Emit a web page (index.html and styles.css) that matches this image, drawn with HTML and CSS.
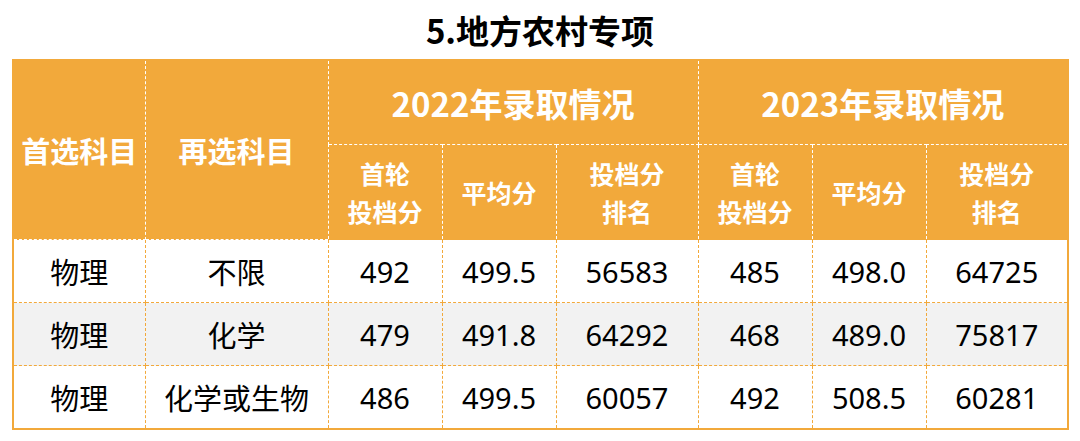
FILE: index.html
```html
<!DOCTYPE html>
<html>
  <head>
    <link rel="stylesheet" href="styles.css">
  </head>
  <body>
    <h1 class="title">5.地方农村专项</h1>
    <table class="scores">
      <colgroup>
        <col class="c-first">
        <col class="c-second">
        <col class="c-num">
        <col class="c-num">
        <col class="c-rank">
        <col class="c-num">
        <col class="c-num">
        <col class="c-rank">
      </colgroup>
      <thead>
        <tr class="head-top">
          <th rowspan="2" class="subject">首选科目</th>
          <th rowspan="2" class="subject">再选科目</th>
          <th colspan="3" class="year">2022年录取情况</th>
          <th colspan="3" class="year">2023年录取情况</th>
        </tr>
        <tr class="head-sub">
          <th>首轮<br>投档分</th>
          <th>平均分</th>
          <th>投档分<br>排名</th>
          <th>首轮<br>投档分</th>
          <th>平均分</th>
          <th>投档分<br>排名</th>
        </tr>
      </thead>
      <tbody>
        <tr>
          <td>物理</td>
          <td>不限</td>
          <td>492</td>
          <td>499.5</td>
          <td>56583</td>
          <td>485</td>
          <td>498.0</td>
          <td>64725</td>
        </tr>
        <tr class="shade">
          <td>物理</td>
          <td>化学</td>
          <td>479</td>
          <td>491.8</td>
          <td>64292</td>
          <td>468</td>
          <td>489.0</td>
          <td>75817</td>
        </tr>
        <tr>
          <td>物理</td>
          <td>化学或生物</td>
          <td>486</td>
          <td>499.5</td>
          <td>60057</td>
          <td>492</td>
          <td>508.5</td>
          <td>60281</td>
        </tr>
      </tbody>
    </table>
  </body>
</html>
```

FILE: styles.css
```css
body {
  margin: 0;
  background: #fff;
  font-family: "Noto Sans", "Noto Sans CJK SC", sans-serif;
  color: #000;
}
.title {
  margin: 0;
  height: 59px;
  display: flex;
  align-items: center;
  justify-content: center;
  font-family: "Noto Sans CJK SC", sans-serif;
  font-size: 33px;
  font-weight: 700;
}
.scores {
  margin-left: 12px;
  width: 1056px;
  table-layout: fixed;
  border-collapse: collapse;
  border: 2px solid #f2a93b;
}
.c-first { width: 132px; }
.c-second { width: 183px; }
.c-num { width: 114px; }
.c-rank { width: 142px; }
th {
  background: #f2a93b;
  color: #fff;
  font-family: "Noto Sans CJK SC", sans-serif;
  font-weight: 700;
  border: 1px dashed #fff;
  padding: 0;
  text-align: center;
}
.head-top th {
  height: 83px;
  border-top: 2px solid #f2a93b;
}
.head-top .subject {
  font-size: 29px;
}
.head-top .year {
  font-size: 33px;
}
.head-sub th {
  height: 94px;
  font-size: 25px;
  line-height: 38px;
  border-bottom: 1px solid #f2a93b;
}
td {
  height: 62px;
  padding: 0;
  text-align: center;
  font-size: 29px;
  border: 1px dashed #f2a93b;
}
.shade td {
  background: #f2f2f2;
}
```
